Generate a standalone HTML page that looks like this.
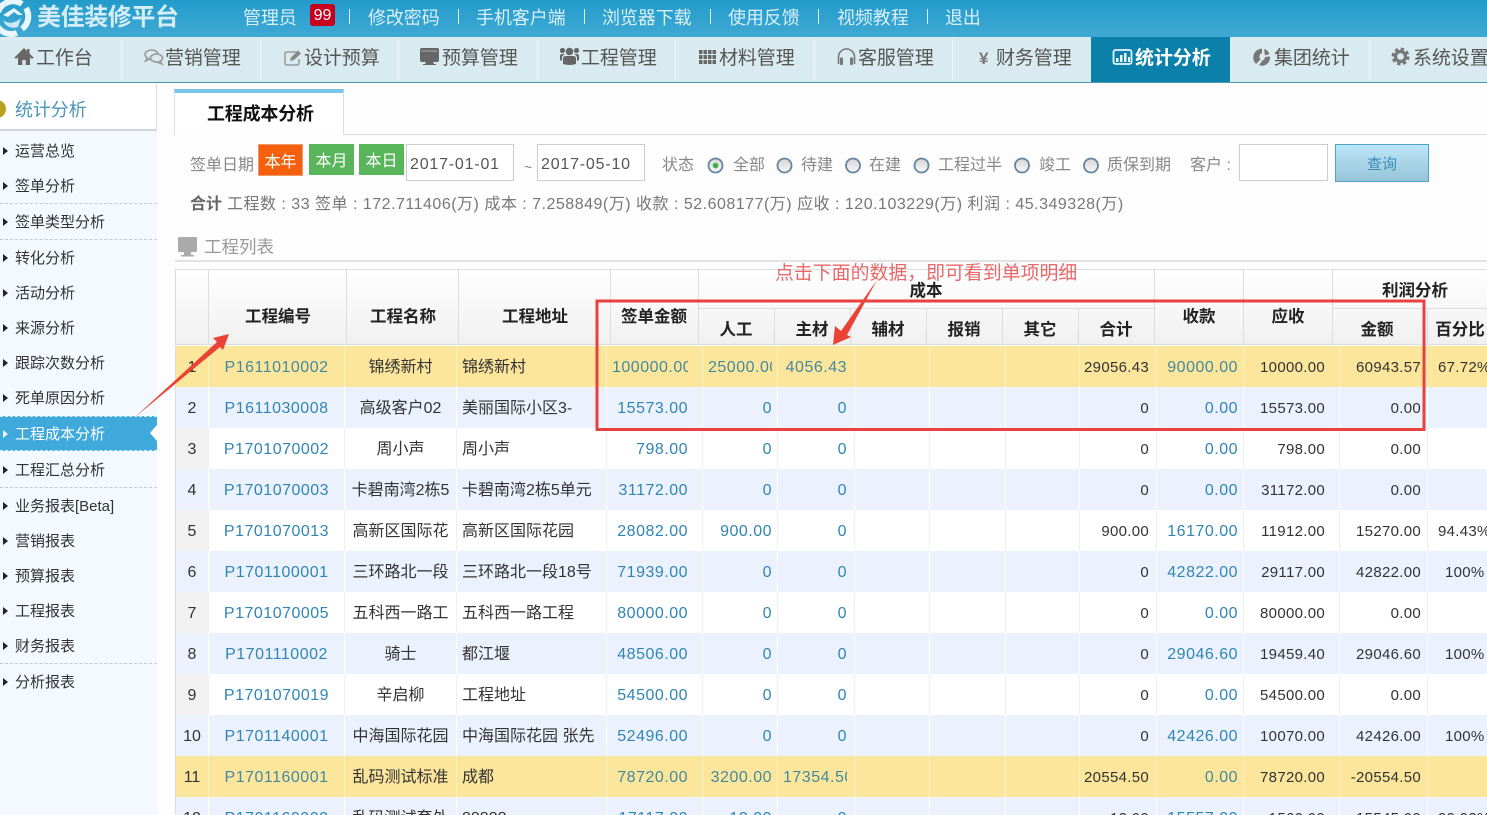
<!DOCTYPE html>
<html lang="zh">
<head>
<meta charset="utf-8">
<title>工程成本分析</title>
<style>
html,body{margin:0;padding:0;width:1487px;height:815px;overflow:hidden;background:#fdfdfd}
body{position:relative;font-family:"Liberation Sans","Noto Sans CJK SC",sans-serif;color:#333}
.a{position:absolute;white-space:nowrap}
#top{position:absolute;left:0;top:0;width:1487px;height:37px;background:linear-gradient(#229bcb,#40a9d4)}
.t{position:absolute;top:5px;line-height:26px;font-size:18px;color:#d9f0f9;white-space:nowrap;letter-spacing:-.1px}
.s{position:absolute;top:9px;width:1px;height:15px;background:#d9f0f9}
#nav{position:absolute;left:0;top:37px;width:1487px;height:45px;background:#d9eaf1;border-bottom:1px solid #4d98a9}
.n{position:absolute;top:0;line-height:43px;font-size:19px;color:#555;white-space:nowrap;letter-spacing:-.1px}
.ns{position:absolute;top:2px;width:1px;height:41px;background:#eef6f9}
#side{position:absolute;left:0;top:83px;width:157px;height:732px;background:#f3f9fe}
#sh{position:absolute;left:0;top:0;width:156px;height:46px;background:#fff;border-bottom:2px solid #cfd6da;border-right:1px solid #ddd}
.m{position:absolute;left:15px;font-size:15px;line-height:20px;color:#333;white-space:nowrap;margin-top:1.5px}
.b{position:absolute;left:3px;width:0;height:0;border-left:5px solid #222;border-top:4.5px solid transparent;border-bottom:4.5px solid transparent;margin-top:1px}
.d{position:absolute;left:0;width:157px;border-top:1px dashed #c3ccd2}
.f{position:absolute;font-size:16px;line-height:22px;color:#888;white-space:nowrap;margin-top:1.5px}
.btn{position:absolute;text-align:center;color:#fff;font-size:16px;white-space:nowrap}
.in{position:absolute;box-sizing:border-box;background:#fff;border:1px solid #ccc;font-size:16px;color:#555;line-height:40px;height:37px;letter-spacing:.8px;padding-left:3px}
#hd{position:absolute;left:175px;top:269px;width:1312px;height:76px;background:linear-gradient(#fff,#f0f0f0);border-top:1px solid #ddd;border-bottom:1px solid #ddd;border-left:1px solid #ddd;box-sizing:border-box}
.h{position:absolute;font-size:16.500px;font-weight:bold;line-height:22px;color:#222;white-space:nowrap;transform:translateX(-50%);margin-top:2.500px}
.v{position:absolute;width:1px;background:#ddd}
table{position:absolute;left:175px;top:346px;border-collapse:collapse;table-layout:fixed;width:1325px;border-left:1px solid #ddd}
td{height:41px;padding:0;font-size:16px;line-height:20px;white-space:nowrap;color:#333;text-align:right;border-right:1px solid #f4f6f9;box-sizing:border-box;overflow:hidden}
tr td{padding-top:2px!important}
tr.e td{background:#ebf2fd;border-right-color:#fff}
tr.o td{background:#fff;border-right-color:#eef0f3}
tr.o td:first-child{background:#f1f1f1}
tr.y td{background:#fbe69b;border-right-color:#fdf0c4}
td:nth-child(1){text-align:center}
td:nth-child(2){text-align:center;color:#2f85b5;letter-spacing:.5px}
td:nth-child(3){text-align:center}
td:nth-child(4){text-align:left;padding-left:5px}
td:nth-child(5){padding:0 14px 0 5px;color:#2f85b5;letter-spacing:.5px}
td:nth-child(6){padding:0 5px;color:#2f85b5;letter-spacing:.5px}
td:nth-child(7){padding:0 7px 0 5px;color:#2f85b5;letter-spacing:.5px}
td:nth-child(11){padding-right:7px;font-size:15px;letter-spacing:.3px}
td:nth-child(12){padding-right:5px;color:#2f85b5;letter-spacing:.5px}
td:nth-child(13){padding-right:14px;font-size:15px;letter-spacing:.3px}
td:nth-child(14){padding-right:6px;font-size:15px;letter-spacing:.3px}
td:nth-child(15){font-size:15px;letter-spacing:.3px;text-align:left;padding-left:10px}
tr.y td:nth-child(2),tr.y td:nth-child(5),tr.y td:nth-child(6),tr.y td:nth-child(7),tr.y td:nth-child(12){color:#45899f}
.c{overflow:hidden;white-space:nowrap;text-align:left}
#ov{position:absolute;left:0;top:0}
</style>
</head>
<body>

<div id="top">
<div class="a" style="left:37px;top:0;line-height:36px;font-size:24px;font-weight:bold;color:#d5edf7;letter-spacing:-.4px">美佳装修平台</div>
<div class="t" style="left:243px">管理员</div>
<div class="a" style="left:310px;top:4px;width:25px;height:22px;line-height:24px;background:#c8001e;border-radius:3px;color:#fff;font-size:16px;text-align:center">99</div>
<div class="s" style="left:349px"></div>
<div class="t" style="left:368px">修改密码</div>
<div class="s" style="left:458px"></div>
<div class="t" style="left:476px">手机客户端</div>
<div class="s" style="left:584px"></div>
<div class="t" style="left:602px">浏览器下载</div>
<div class="s" style="left:710px"></div>
<div class="t" style="left:728px">使用反馈</div>
<div class="s" style="left:818px"></div>
<div class="t" style="left:837px">视频教程</div>
<div class="s" style="left:927px"></div>
<div class="t" style="left:945px">退出</div>
</div>

<div id="nav">
<div class="n" style="left:36px">工作台</div>
<div class="ns" style="left:121px"></div>
<div class="n" style="left:165px">营销管理</div>
<div class="ns" style="left:260px"></div>
<div class="n" style="left:304px">设计预算</div>
<div class="ns" style="left:398px"></div>
<div class="n" style="left:442px">预算管理</div>
<div class="ns" style="left:537px"></div>
<div class="n" style="left:581px">工程管理</div>
<div class="ns" style="left:675px"></div>
<div class="n" style="left:719px">材料管理</div>
<div class="ns" style="left:814px"></div>
<div class="n" style="left:858px">客服管理</div>
<div class="ns" style="left:952px"></div>
<div class="n" style="left:979px;font-size:17px;font-weight:bold;color:#777">¥</div>
<div class="n" style="left:996px">财务管理</div>
<div class="a" style="left:1091px;top:0;width:139px;height:45px;background:#0a80aa"></div>
<div class="n" style="left:1135px;color:#fff;font-weight:bold">统计分析</div>
<div class="n" style="left:1274px">集团统计</div>
<div class="ns" style="left:1369px"></div>
<div class="n" style="left:1413px">系统设置</div>
</div>

<div id="side">
<div id="sh"><div class="a" style="left:15px;top:14px;font-size:18px;line-height:26px;color:#4a96b8;letter-spacing:-.1px">统计分析</div></div>
<div class="a" style="left:0;top:333px;width:157px;height:35px;box-sizing:border-box;background:#3fa9dc;border-top:1px dashed #d5eef9;border-bottom:1px dashed #d5eef9"></div>
<div class="a" style="left:150px;top:342px;width:0;height:0;border-right:7px solid #fff;border-top:8px solid transparent;border-bottom:8px solid transparent"></div>

<div class="b" style="top:63px"></div><div class="m" style="top:57px">运营总览</div>
<div class="b" style="top:98px"></div><div class="m" style="top:92px">签单分析</div>
<div class="d" style="top:120px"></div>
<div class="b" style="top:134px"></div><div class="m" style="top:128px">签单类型分析</div>
<div class="d" style="top:156px"></div>
<div class="b" style="top:170px"></div><div class="m" style="top:164px">转化分析</div>
<div class="b" style="top:205px"></div><div class="m" style="top:199px">活动分析</div>
<div class="b" style="top:240px"></div><div class="m" style="top:234px">来源分析</div>
<div class="b" style="top:275px"></div><div class="m" style="top:269px">跟踪次数分析</div>
<div class="b" style="top:310px"></div><div class="m" style="top:304px">死单原因分析</div>
<div class="b" style="top:346px;border-left-color:#e6f5fc"></div><div class="m" style="top:340px;color:#fff">工程成本分析</div>
<div class="b" style="top:382px"></div><div class="m" style="top:376px">工程汇总分析</div>
<div class="d" style="top:404px"></div>
<div class="b" style="top:418px"></div><div class="m" style="top:412px">业务报表[Beta]</div>
<div class="b" style="top:453px"></div><div class="m" style="top:447px">营销报表</div>
<div class="b" style="top:488px"></div><div class="m" style="top:482px">预算报表</div>
<div class="b" style="top:523px"></div><div class="m" style="top:517px">工程报表</div>
<div class="b" style="top:558px"></div><div class="m" style="top:552px">财务报表</div>
<div class="d" style="top:580px"></div>
<div class="b" style="top:594px"></div><div class="m" style="top:588px">分析报表</div>
</div>

<div class="a" style="left:344px;top:134px;width:1143px;height:1px;background:#ddd"></div>
<div class="a" style="left:174px;top:89px;width:170px;height:46px;box-sizing:border-box;background:#fff;border:1px solid #ddd;border-top:4px solid #7ac5e8;border-bottom:0"></div>
<div class="a" style="left:207px;top:101px;font-size:18px;font-weight:bold;line-height:26px;color:#111;letter-spacing:-.2px">工程成本分析</div>

<div class="f" style="left:190px;top:153px">签单日期</div>
<div class="btn" style="left:258px;top:144px;width:45px;height:32px;line-height:37px;background:#f5600f;box-shadow:inset 0 0 0 1px #f09a6a">本年</div>
<div class="btn" style="left:309px;top:144px;width:45px;height:31px;line-height:35px;background:#58b55a">本月</div>
<div class="btn" style="left:359px;top:144px;width:45px;height:31px;line-height:35px;background:#58b55a">本日</div>
<div class="in" style="left:406px;top:144px;width:108px">2017-01-01</div>
<div class="f" style="left:524px;top:154px;font-size:14px">~</div>
<div class="in" style="left:537px;top:144px;width:108px">2017-05-10</div>
<div class="f" style="left:662px;top:153px">状态</div>
<div class="f" style="left:733px;top:153px">全部</div>
<div class="f" style="left:801px;top:153px">待建</div>
<div class="f" style="left:869px;top:153px">在建</div>
<div class="f" style="left:938px;top:153px">工程过半</div>
<div class="f" style="left:1039px;top:153px">竣工</div>
<div class="f" style="left:1107px;top:153px">质保到期</div>
<div class="f" style="left:1190px;top:153px">客户 :</div>
<div class="in" style="left:1239px;top:144px;width:89px"></div>
<div class="a" style="left:1335px;top:144px;width:94px;height:38px;box-sizing:border-box;border:1px solid #4fa3c4;background:linear-gradient(#bce6f8,#97c4d9);color:#3a8ab5;font-size:15px;line-height:39px;text-align:center">查询</div>

<div class="f" style="left:190px;top:192px;color:#777;letter-spacing:.5px"><b style="color:#666;letter-spacing:0">合计</b> 工程数 : 33 签单 : 172.711406(万) 成本 : 7.258849(万) 收款 : 52.608177(万) 应收 : 120.103229(万) 利润 : 45.349328(万)</div>

<div class="a" style="left:204px;top:234px;font-size:17.500px;line-height:26px;color:#999">工程列表</div>
<div class="a" style="left:175px;top:260px;width:1312px;height:2px;background:#e2e2e2"></div>

<div id="hd"></div>
<div class="v" style="left:208px;top:270px;height:75px"></div>
<div class="v" style="left:346px;top:270px;height:75px"></div>
<div class="v" style="left:458px;top:270px;height:75px"></div>
<div class="v" style="left:610px;top:270px;height:75px"></div>
<div class="v" style="left:698px;top:270px;height:75px"></div>
<div class="v" style="left:774px;top:308px;height:37px"></div>
<div class="v" style="left:850px;top:308px;height:37px"></div>
<div class="v" style="left:926px;top:308px;height:37px"></div>
<div class="v" style="left:1002px;top:308px;height:37px"></div>
<div class="v" style="left:1078px;top:308px;height:37px"></div>
<div class="v" style="left:1154px;top:270px;height:75px"></div>
<div class="v" style="left:1243px;top:270px;height:75px"></div>
<div class="v" style="left:1332px;top:270px;height:75px"></div>
<div class="v" style="left:1427px;top:308px;height:37px"></div>
<div class="a" style="left:698px;top:308px;width:456px;height:1px;background:#ddd"></div>
<div class="a" style="left:1332px;top:308px;width:155px;height:1px;background:#ddd"></div>
<div class="h" style="left:278px;top:303px">工程编号</div>
<div class="h" style="left:403px;top:303px">工程名称</div>
<div class="h" style="left:535px;top:303px">工程地址</div>
<div class="h" style="left:654px;top:303px">签单金额</div>
<div class="h" style="left:926px;top:277px">成本</div>
<div class="h" style="left:736px;top:316px">人工</div>
<div class="h" style="left:812px;top:316px">主材</div>
<div class="h" style="left:888px;top:316px">辅材</div>
<div class="h" style="left:964px;top:316px">报销</div>
<div class="h" style="left:1040px;top:316px">其它</div>
<div class="h" style="left:1116px;top:316px">合计</div>
<div class="h" style="left:1199px;top:303px">收款</div>
<div class="h" style="left:1288px;top:303px">应收</div>
<div class="h" style="left:1415px;top:277px">利润分析</div>
<div class="h" style="left:1377px;top:316px">金额</div>
<div class="h" style="left:1460px;top:316px">百分比</div>

<table>
<colgroup><col style="width:33px"><col style="width:136px"><col style="width:112px"><col style="width:150px"><col style="width:96px"><col style="width:75px"><col style="width:77px"><col style="width:75px"><col style="width:76px"><col style="width:74px"><col style="width:77px"><col style="width:87px"><col style="width:96px"><col style="width:88px"><col style="width:73px"></colgroup>
<tr class="y"><td>1</td><td>P1611010002</td><td>锦绣新村</td><td>锦绣新村</td><td><div class="c">100000.00</div></td><td><div class="c">25000.00</div></td><td>4056.43</td><td></td><td></td><td></td><td>29056.43</td><td>90000.00</td><td>10000.00</td><td>60943.57</td><td>67.72%</td></tr>
<tr class="e"><td>2</td><td>P1611030008</td><td>高级客户02</td><td>美丽国际小区3-</td><td>15573.00</td><td>0</td><td>0</td><td></td><td></td><td></td><td>0</td><td>0.00</td><td>15573.00</td><td>0.00</td><td></td></tr>
<tr class="o"><td>3</td><td>P1701070002</td><td>周小声</td><td>周小声</td><td>798.00</td><td>0</td><td>0</td><td></td><td></td><td></td><td>0</td><td>0.00</td><td>798.00</td><td>0.00</td><td></td></tr>
<tr class="e"><td>4</td><td>P1701070003</td><td>卡碧南湾2栋5</td><td>卡碧南湾2栋5单元</td><td>31172.00</td><td>0</td><td>0</td><td></td><td></td><td></td><td>0</td><td>0.00</td><td>31172.00</td><td>0.00</td><td></td></tr>
<tr class="o"><td>5</td><td>P1701070013</td><td>高新区国际花</td><td>高新区国际花园</td><td>28082.00</td><td>900.00</td><td>0</td><td></td><td></td><td></td><td>900.00</td><td>16170.00</td><td>11912.00</td><td>15270.00</td><td>94.43%</td></tr>
<tr class="e"><td>6</td><td>P1701100001</td><td>三环路北一段</td><td>三环路北一段18号</td><td>71939.00</td><td>0</td><td>0</td><td></td><td></td><td></td><td>0</td><td>42822.00</td><td>29117.00</td><td>42822.00</td><td style="padding-left:17px">100%</td></tr>
<tr class="o"><td>7</td><td>P1701070005</td><td>五科西一路工</td><td>五科西一路工程</td><td>80000.00</td><td>0</td><td>0</td><td></td><td></td><td></td><td>0</td><td>0.00</td><td>80000.00</td><td>0.00</td><td></td></tr>
<tr class="e"><td>8</td><td>P1701110002</td><td>骑士</td><td>都江堰</td><td>48506.00</td><td>0</td><td>0</td><td></td><td></td><td></td><td>0</td><td>29046.60</td><td>19459.40</td><td>29046.60</td><td style="padding-left:17px">100%</td></tr>
<tr class="o"><td>9</td><td>P1701070019</td><td>辛启柳</td><td>工程地址</td><td>54500.00</td><td>0</td><td>0</td><td></td><td></td><td></td><td>0</td><td>0.00</td><td>54500.00</td><td>0.00</td><td></td></tr>
<tr class="e"><td>10</td><td>P1701140001</td><td>中海国际花园</td><td>中海国际花园 张先</td><td>52496.00</td><td>0</td><td>0</td><td></td><td></td><td></td><td>0</td><td>42426.00</td><td>10070.00</td><td>42426.00</td><td style="padding-left:17px">100%</td></tr>
<tr class="y"><td>11</td><td>P1701160001</td><td>乱码测试标准</td><td>成都</td><td>78720.00</td><td>3200.00</td><td><div class="c">17354.50</div></td><td></td><td></td><td></td><td>20554.50</td><td>0.00</td><td>78720.00</td><td>-20554.50</td><td></td></tr>
<tr class="e"><td>12</td><td>P1701160002</td><td>乱码测试套外</td><td>88888</td><td>17117.00</td><td>12.00</td><td>0</td><td></td><td></td><td></td><td>12.00</td><td>15557.00</td><td>1560.00</td><td>15545.00</td><td>99.92%</td></tr>
</table>

<div class="a" style="left:775px;top:261px;font-size:18.900px;line-height:25px;color:#e8686a">点击下面的数据，即可看到单项明细</div>

<svg id="ov" width="1487" height="815" viewBox="0 0 1487 815" xmlns="http://www.w3.org/2000/svg">
<!-- logo -->
<g fill="none" stroke="#e8f5fb" stroke-width="6">
<path d="M-2 12 A16 16 0 0 1 22 4"/>
<path d="M26 8 A16 16 0 0 1 22 29"/>
<path d="M17 33 A16 16 0 0 1 -2 27"/>
</g>
<path d="M3 15 L14 8 L23 15 L18 15 L14 12 L8 17 Z" fill="#e8f5fb"/>
<path d="M3 20 C8 24 14 24 21 18 L18 27 C11 29 6 27 3 20 Z" fill="#e8f5fb" opacity=".85"/>

<!-- home -->
<path d="M24 48 L14.500 57.500 L16 59 L18 57.300 V65 H22.300 V60 H25.700 V65 H30 V57.300 L32 59 L33.500 57.500 L29.500 53.500 V49 H27 V51 Z" fill="#666"/>
<!-- chat -->
<g fill="#d9eaf1" stroke="#999" stroke-width="1.600">
<ellipse cx="151.500" cy="54.500" rx="6.500" ry="4.500"/>
<path d="M147 58 L145.500 61 L150 59"/>
<ellipse cx="156.500" cy="58" rx="6" ry="4"/>
<path d="M160 61 L162 64 L157 62"/>
</g>
<!-- edit -->
<path d="M297 52 H287 Q285 52 285 54 V63 Q285 65 287 65 H297 Q299 65 299 63 V59" fill="none" stroke="#999" stroke-width="1.500"/>
<path d="M290 61 L291 57.500 L298 50.500 L301 53.500 L294 60 Z" fill="#888"/>
<!-- monitor -->
<path d="M422 48 H437 Q439 48 439 50 V60 Q439 62 437 62 H433 L434 64 H436 V65 H423 V64 H425 L426 62 H422 Q420 62 420 60 V50 Q420 48 422 48 Z" fill="#666"/>
<rect x="421.500" y="50" width="16" height="2" fill="#8a8a8a"/>
<!-- users -->
<g fill="#666">
<circle cx="569.500" cy="51.500" r="3.800"/>
<circle cx="562.500" cy="50.500" r="2.600"/>
<circle cx="576.500" cy="50.500" r="2.600"/>
<path d="M563 64 V58.500 Q563 56 566 56 H573 Q576 56 576 58.500 V64 Q569.500 66 563 64 Z"/>
<path d="M560 60 V56 Q560 54 562 54 H565 Q563 55 562 57 V61 Z"/>
<path d="M579 60 V56 Q579 54 577 54 H574 Q576 55 577 57 V61 Z"/>
</g>
<!-- grid -->
<g fill="#666">
<rect x="699" y="50" width="3.500" height="4"/><rect x="703.500" y="50" width="3.500" height="4"/><rect x="708" y="50" width="3.500" height="4"/><rect x="712.500" y="50" width="3.500" height="4"/>
<rect x="699" y="55" width="3.500" height="4"/><rect x="703.500" y="55" width="3.500" height="4"/><rect x="708" y="55" width="3.500" height="4"/><rect x="712.500" y="55" width="3.500" height="4"/>
<rect x="699" y="60" width="3.500" height="4"/><rect x="703.500" y="60" width="3.500" height="4"/><rect x="708" y="60" width="3.500" height="4"/><rect x="712.500" y="60" width="3.500" height="4"/>
</g>
<!-- headphones -->
<path d="M838.500 64 V57 A8 8 0 0 1 854.500 57 V64" fill="none" stroke="#777" stroke-width="1.600"/>
<rect x="840" y="57.500" width="3" height="7.500" rx="1" fill="#777"/>
<rect x="850" y="57.500" width="3" height="7.500" rx="1" fill="#777"/>
<!-- chart active -->
<rect x="1113.500" y="50" width="18" height="14" rx="2" fill="#0a80aa" stroke="#e8f5fa" stroke-width="1.800"/>
<g fill="#e8f5fa"><rect x="1116" y="58" width="2.500" height="4"/><rect x="1120" y="55" width="2.500" height="7"/><rect x="1124" y="53" width="2.500" height="9"/><rect x="1128" y="57" width="2" height="5"/></g>
<!-- pie -->
<path d="M1262 48.500 A9 9 0 0 0 1256 64 L1260.500 59.500 A4 4 0 0 1 1262 53 Z" fill="#777"/>
<path d="M1264 49 A8 8 0 0 1 1269.500 54 L1265 55.500 Z" fill="#777"/>
<path d="M1265 57 L1270 56.500 A8 8 0 0 1 1259 65 L1262.500 60.500 A4 4 0 0 0 1265 57 Z" fill="#777"/>
<!-- gear -->
<circle cx="1400.500" cy="56.500" r="5" fill="none" stroke="#777" stroke-width="3.200"/>
<circle cx="1400.500" cy="56.500" r="7.500" fill="none" stroke="#777" stroke-width="3" stroke-dasharray="3.300 2.590"/>

<!-- sidebar disc -->
<circle cx="-3" cy="109" r="9" fill="#b7a21f"/>
<path d="M0 112 A9 9 0 0 1 -3 118 V112 Z" fill="#6ea52c"/>

<!-- radios -->
<defs><linearGradient id="r" x1="0" y1="0" x2="0" y2="1"><stop offset="0" stop-color="#d6d6d6"/><stop offset="1" stop-color="#f8f8f8"/></linearGradient></defs>
<g fill="url(#r)" stroke="#66859e" stroke-width="1.800">
<circle cx="715.500" cy="165.500" r="7"/>
<circle cx="784.500" cy="165.500" r="7"/>
<circle cx="853" cy="165.500" r="7"/>
<circle cx="921.500" cy="165.500" r="7"/>
<circle cx="1022" cy="165.500" r="7"/>
<circle cx="1091" cy="165.500" r="7"/>
</g>
<circle cx="715.500" cy="165.500" r="2.800" fill="#3fae49"/>

<!-- list icon -->
<rect x="178" y="237" width="19" height="15" rx="1" fill="#aaa"/>
<rect x="184" y="252" width="7" height="3" fill="#aaa"/>
<rect x="181" y="255" width="13" height="1.500" fill="#aaa"/>

<!-- annotations -->
<rect x="597" y="301" width="827" height="128.500" fill="none" stroke="#e8413f" stroke-width="3"/>
<polygon points="229,334 213,338 217,342 134,418 220,347 223,350" fill="#ea4335"/>
<polygon points="833,345 835,326 841,331 877,280 847,335 851,337" fill="#ea4335"/>
</svg>
</body>
</html>
